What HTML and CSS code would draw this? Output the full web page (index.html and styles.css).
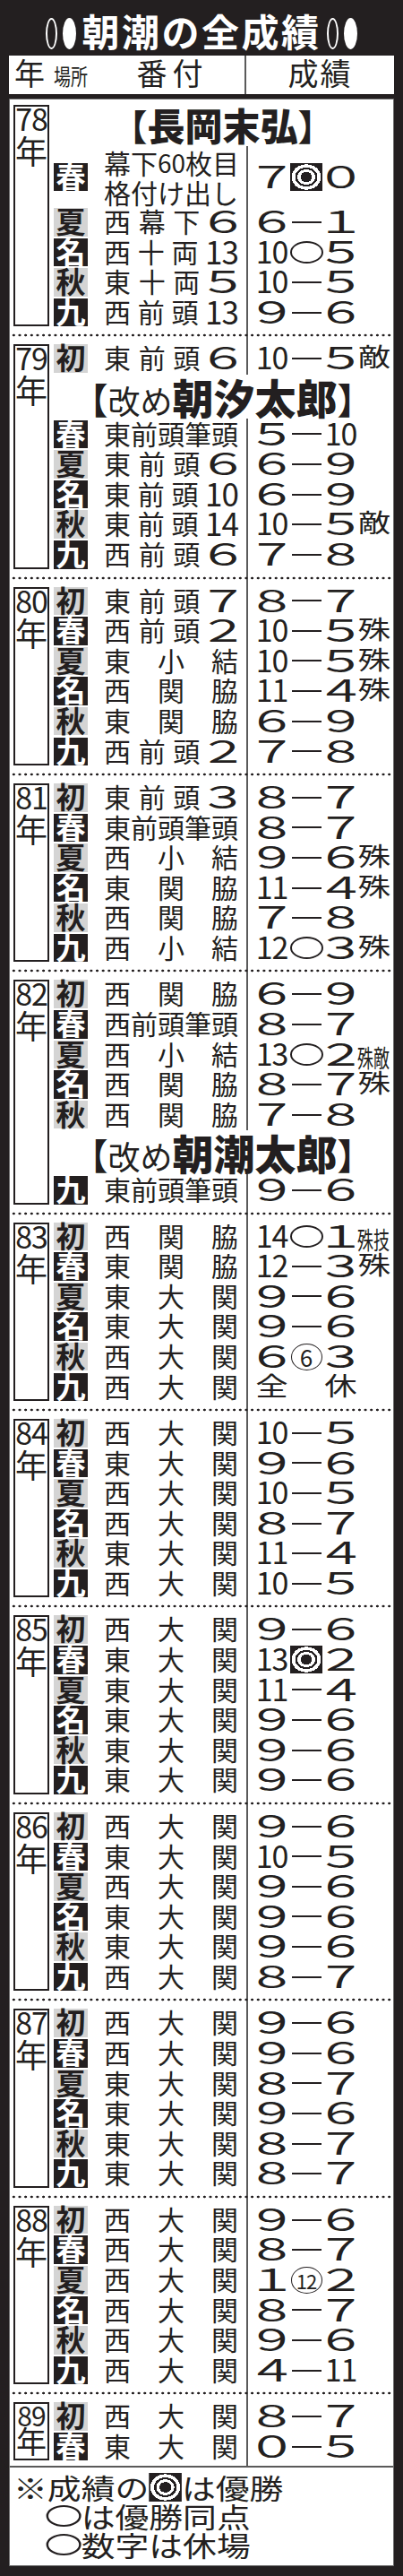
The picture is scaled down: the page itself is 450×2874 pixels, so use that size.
FILE: index.html
```html
<!DOCTYPE html>
<html lang="ja">
<head>
<meta charset="utf-8">
<title>朝潮の全成績</title>
<link rel="stylesheet" href="styles.css">
</head>
<body>
<div class="page">
  <div class="title"><span class="ov o first"></span><span class="ov f"></span><span class="tt">朝潮の全成績</span><span class="ov o"></span><span class="ov f"></span></div>
  <div class="head">
    <div class="hl"><span class="hy">年</span><span class="hb"><span class="hbi">場所</span></span><span class="hr">番付</span></div>
    <div class="hs">成績</div>
  </div>
  <div class="main">
    <div class="data">

      <section class="yr">
        <div class="ybox"><span class="yn">78</span><span class="yk">年</span></div>
        <div class="rows">
          <div class="name n78"><span class="br">【</span>長岡末弘<span class="br">】</span></div>
          <div class="row r2"><b class="bs d">春</b><span class="rank two"><span class="ln"><i>幕</i><i>下</i><i class="d2s">60</i><i>枚</i><i>目</i></span><span class="ln"><i>格</i><i>付</i><i>け</i><i>出</i><i>し</i></span></span><span class="score"><i class="w d1">７</i><i class="m"><b class="win"></b></i><i class="l d1">０</i></span></div>
          <div class="row"><b class="bs g">夏</b><span class="rank"><i>西</i><i>幕</i><i>下</i><i class="d1">６</i></span><span class="score"><i class="w d1">６</i><i class="m"><b class="dash"></b></i><i class="l d1">１</i></span></div>
          <div class="row"><b class="bs d">名</b><span class="rank"><i>西</i><i>十</i><i>両</i><i class="d2">13</i></span><span class="score"><i class="w d2">10</i><i class="m"><b class="tie"></b></i><i class="l d1">５</i></span></div>
          <div class="row"><b class="bs g">秋</b><span class="rank"><i>東</i><i>十</i><i>両</i><i class="d1">５</i></span><span class="score"><i class="w d2">10</i><i class="m"><b class="dash"></b></i><i class="l d1">５</i></span></div>
          <div class="row"><b class="bs d">九</b><span class="rank"><i>西</i><i>前</i><i>頭</i><i class="d2">13</i></span><span class="score"><i class="w d1">９</i><i class="m"><b class="dash"></b></i><i class="l d1">６</i></span></div>
        </div>
      </section>
      <div class="sep"></div>

      <section class="yr">
        <div class="ybox"><span class="yn">79</span><span class="yk">年</span></div>
        <div class="rows">
          <div class="row"><b class="bs g">初</b><span class="rank"><i>東</i><i>前</i><i>頭</i><i class="d1">６</i></span><span class="score"><i class="w d2">10</i><i class="m"><b class="dash"></b></i><i class="l d1">５</i><i class="x wk">敵</i></span></div>
          <div class="name"><span class="br">【</span><span class="pre">改め</span><span class="nm">朝汐太郎</span><span class="br">】</span></div>
          <div class="row"><b class="bs d">春</b><span class="rank"><i>東</i><i>前</i><i>頭</i><i>筆</i><i>頭</i></span><span class="score"><i class="w d1">５</i><i class="m"><b class="dash"></b></i><i class="l d2">10</i></span></div>
          <div class="row"><b class="bs g">夏</b><span class="rank"><i>東</i><i>前</i><i>頭</i><i class="d1">６</i></span><span class="score"><i class="w d1">６</i><i class="m"><b class="dash"></b></i><i class="l d1">９</i></span></div>
          <div class="row"><b class="bs d">名</b><span class="rank"><i>東</i><i>前</i><i>頭</i><i class="d2">10</i></span><span class="score"><i class="w d1">６</i><i class="m"><b class="dash"></b></i><i class="l d1">９</i></span></div>
          <div class="row"><b class="bs g">秋</b><span class="rank"><i>東</i><i>前</i><i>頭</i><i class="d2">14</i></span><span class="score"><i class="w d2">10</i><i class="m"><b class="dash"></b></i><i class="l d1">５</i><i class="x wk">敵</i></span></div>
          <div class="row"><b class="bs d">九</b><span class="rank"><i>西</i><i>前</i><i>頭</i><i class="d1">６</i></span><span class="score"><i class="w d1">７</i><i class="m"><b class="dash"></b></i><i class="l d1">８</i></span></div>
        </div>
      </section>
      <div class="sep"></div>

      <section class="yr">
        <div class="ybox"><span class="yn">80</span><span class="yk">年</span></div>
        <div class="rows">
          <div class="row"><b class="bs g">初</b><span class="rank"><i>東</i><i>前</i><i>頭</i><i class="d1">７</i></span><span class="score"><i class="w d1">８</i><i class="m"><b class="dash"></b></i><i class="l d1">７</i></span></div>
          <div class="row"><b class="bs d">春</b><span class="rank"><i>西</i><i>前</i><i>頭</i><i class="d1">２</i></span><span class="score"><i class="w d2">10</i><i class="m"><b class="dash"></b></i><i class="l d1">５</i><i class="x wk">殊</i></span></div>
          <div class="row"><b class="bs g">夏</b><span class="rank"><i>東</i><i>小</i><i>結</i></span><span class="score"><i class="w d2">10</i><i class="m"><b class="dash"></b></i><i class="l d1">５</i><i class="x wk">殊</i></span></div>
          <div class="row"><b class="bs d">名</b><span class="rank"><i>西</i><i>関</i><i>脇</i></span><span class="score"><i class="w d2">11</i><i class="m"><b class="dash"></b></i><i class="l d1">４</i><i class="x wk">殊</i></span></div>
          <div class="row"><b class="bs g">秋</b><span class="rank"><i>東</i><i>関</i><i>脇</i></span><span class="score"><i class="w d1">６</i><i class="m"><b class="dash"></b></i><i class="l d1">９</i></span></div>
          <div class="row"><b class="bs d">九</b><span class="rank"><i>西</i><i>前</i><i>頭</i><i class="d1">２</i></span><span class="score"><i class="w d1">７</i><i class="m"><b class="dash"></b></i><i class="l d1">８</i></span></div>
        </div>
      </section>
      <div class="sep"></div>

      <section class="yr">
        <div class="ybox"><span class="yn">81</span><span class="yk">年</span></div>
        <div class="rows">
          <div class="row"><b class="bs g">初</b><span class="rank"><i>東</i><i>前</i><i>頭</i><i class="d1">３</i></span><span class="score"><i class="w d1">８</i><i class="m"><b class="dash"></b></i><i class="l d1">７</i></span></div>
          <div class="row"><b class="bs d">春</b><span class="rank"><i>東</i><i>前</i><i>頭</i><i>筆</i><i>頭</i></span><span class="score"><i class="w d1">８</i><i class="m"><b class="dash"></b></i><i class="l d1">７</i></span></div>
          <div class="row"><b class="bs g">夏</b><span class="rank"><i>西</i><i>小</i><i>結</i></span><span class="score"><i class="w d1">９</i><i class="m"><b class="dash"></b></i><i class="l d1">６</i><i class="x wk">殊</i></span></div>
          <div class="row"><b class="bs d">名</b><span class="rank"><i>東</i><i>関</i><i>脇</i></span><span class="score"><i class="w d2">11</i><i class="m"><b class="dash"></b></i><i class="l d1">４</i><i class="x wk">殊</i></span></div>
          <div class="row"><b class="bs g">秋</b><span class="rank"><i>西</i><i>関</i><i>脇</i></span><span class="score"><i class="w d1">７</i><i class="m"><b class="dash"></b></i><i class="l d1">８</i></span></div>
          <div class="row"><b class="bs d">九</b><span class="rank"><i>西</i><i>小</i><i>結</i></span><span class="score"><i class="w d2">12</i><i class="m"><b class="tie"></b></i><i class="l d1">３</i><i class="x wk">殊</i></span></div>
        </div>
      </section>
      <div class="sep"></div>

      <section class="yr">
        <div class="ybox"><span class="yn">82</span><span class="yk">年</span></div>
        <div class="rows">
          <div class="row"><b class="bs g">初</b><span class="rank"><i>西</i><i>関</i><i>脇</i></span><span class="score"><i class="w d1">６</i><i class="m"><b class="dash"></b></i><i class="l d1">９</i></span></div>
          <div class="row"><b class="bs d">春</b><span class="rank"><i>西</i><i>前</i><i>頭</i><i>筆</i><i>頭</i></span><span class="score"><i class="w d1">８</i><i class="m"><b class="dash"></b></i><i class="l d1">７</i></span></div>
          <div class="row"><b class="bs g">夏</b><span class="rank"><i>西</i><i>小</i><i>結</i></span><span class="score"><i class="w d2">13</i><i class="m"><b class="tie"></b></i><i class="l d1">２</i><i class="x sp"><span class="spi">殊敵</span></i></span></div>
          <div class="row"><b class="bs d">名</b><span class="rank"><i>西</i><i>関</i><i>脇</i></span><span class="score"><i class="w d1">８</i><i class="m"><b class="dash"></b></i><i class="l d1">７</i><i class="x wk">殊</i></span></div>
          <div class="row"><b class="bs g">秋</b><span class="rank"><i>西</i><i>関</i><i>脇</i></span><span class="score"><i class="w d1">７</i><i class="m"><b class="dash"></b></i><i class="l d1">８</i></span></div>
          <div class="name"><span class="br">【</span><span class="pre">改め</span><span class="nm">朝潮太郎</span><span class="br">】</span></div>
          <div class="row"><b class="bs d">九</b><span class="rank"><i>東</i><i>前</i><i>頭</i><i>筆</i><i>頭</i></span><span class="score"><i class="w d1">９</i><i class="m"><b class="dash"></b></i><i class="l d1">６</i></span></div>
        </div>
      </section>
      <div class="sep"></div>

      <section class="yr">
        <div class="ybox"><span class="yn">83</span><span class="yk">年</span></div>
        <div class="rows">
          <div class="row"><b class="bs g">初</b><span class="rank"><i>西</i><i>関</i><i>脇</i></span><span class="score"><i class="w d2">14</i><i class="m"><b class="tie"></b></i><i class="l d1">１</i><i class="x sp"><span class="spi">殊技</span></i></span></div>
          <div class="row"><b class="bs d">春</b><span class="rank"><i>東</i><i>関</i><i>脇</i></span><span class="score"><i class="w d2">12</i><i class="m"><b class="dash"></b></i><i class="l d1">３</i><i class="x wk">殊</i></span></div>
          <div class="row"><b class="bs g">夏</b><span class="rank"><i>東</i><i>大</i><i>関</i></span><span class="score"><i class="w d1">９</i><i class="m"><b class="dash"></b></i><i class="l d1">６</i></span></div>
          <div class="row"><b class="bs d">名</b><span class="rank"><i>東</i><i>大</i><i>関</i></span><span class="score"><i class="w d1">９</i><i class="m"><b class="dash"></b></i><i class="l d1">６</i></span></div>
          <div class="row"><b class="bs g">秋</b><span class="rank"><i>西</i><i>大</i><i>関</i></span><span class="score"><i class="w d1">６</i><i class="m"><b class="cn">6</b></i><i class="l d1">３</i></span></div>
          <div class="row"><b class="bs d">九</b><span class="rank"><i>西</i><i>大</i><i>関</i></span><span class="score"><i class="w wk">全</i><i class="m"></i><i class="l wk">休</i></span></div>
        </div>
      </section>
      <div class="sep"></div>

      <section class="yr">
        <div class="ybox"><span class="yn">84</span><span class="yk">年</span></div>
        <div class="rows">
          <div class="row"><b class="bs g">初</b><span class="rank"><i>西</i><i>大</i><i>関</i></span><span class="score"><i class="w d2">10</i><i class="m"><b class="dash"></b></i><i class="l d1">５</i></span></div>
          <div class="row"><b class="bs d">春</b><span class="rank"><i>東</i><i>大</i><i>関</i></span><span class="score"><i class="w d1">９</i><i class="m"><b class="dash"></b></i><i class="l d1">６</i></span></div>
          <div class="row"><b class="bs g">夏</b><span class="rank"><i>西</i><i>大</i><i>関</i></span><span class="score"><i class="w d2">10</i><i class="m"><b class="dash"></b></i><i class="l d1">５</i></span></div>
          <div class="row"><b class="bs d">名</b><span class="rank"><i>西</i><i>大</i><i>関</i></span><span class="score"><i class="w d1">８</i><i class="m"><b class="dash"></b></i><i class="l d1">７</i></span></div>
          <div class="row"><b class="bs g">秋</b><span class="rank"><i>東</i><i>大</i><i>関</i></span><span class="score"><i class="w d2">11</i><i class="m"><b class="dash"></b></i><i class="l d1">４</i></span></div>
          <div class="row"><b class="bs d">九</b><span class="rank"><i>西</i><i>大</i><i>関</i></span><span class="score"><i class="w d2">10</i><i class="m"><b class="dash"></b></i><i class="l d1">５</i></span></div>
        </div>
      </section>
      <div class="sep"></div>

      <section class="yr">
        <div class="ybox"><span class="yn">85</span><span class="yk">年</span></div>
        <div class="rows">
          <div class="row"><b class="bs g">初</b><span class="rank"><i>西</i><i>大</i><i>関</i></span><span class="score"><i class="w d1">９</i><i class="m"><b class="dash"></b></i><i class="l d1">６</i></span></div>
          <div class="row"><b class="bs d">春</b><span class="rank"><i>東</i><i>大</i><i>関</i></span><span class="score"><i class="w d2">13</i><i class="m"><b class="win"></b></i><i class="l d1">２</i></span></div>
          <div class="row"><b class="bs g">夏</b><span class="rank"><i>東</i><i>大</i><i>関</i></span><span class="score"><i class="w d2">11</i><i class="m"><b class="dash"></b></i><i class="l d1">４</i></span></div>
          <div class="row"><b class="bs d">名</b><span class="rank"><i>東</i><i>大</i><i>関</i></span><span class="score"><i class="w d1">９</i><i class="m"><b class="dash"></b></i><i class="l d1">６</i></span></div>
          <div class="row"><b class="bs g">秋</b><span class="rank"><i>東</i><i>大</i><i>関</i></span><span class="score"><i class="w d1">９</i><i class="m"><b class="dash"></b></i><i class="l d1">６</i></span></div>
          <div class="row"><b class="bs d">九</b><span class="rank"><i>東</i><i>大</i><i>関</i></span><span class="score"><i class="w d1">９</i><i class="m"><b class="dash"></b></i><i class="l d1">６</i></span></div>
        </div>
      </section>
      <div class="sep"></div>

      <section class="yr">
        <div class="ybox"><span class="yn">86</span><span class="yk">年</span></div>
        <div class="rows">
          <div class="row"><b class="bs g">初</b><span class="rank"><i>西</i><i>大</i><i>関</i></span><span class="score"><i class="w d1">９</i><i class="m"><b class="dash"></b></i><i class="l d1">６</i></span></div>
          <div class="row"><b class="bs d">春</b><span class="rank"><i>東</i><i>大</i><i>関</i></span><span class="score"><i class="w d2">10</i><i class="m"><b class="dash"></b></i><i class="l d1">５</i></span></div>
          <div class="row"><b class="bs g">夏</b><span class="rank"><i>西</i><i>大</i><i>関</i></span><span class="score"><i class="w d1">９</i><i class="m"><b class="dash"></b></i><i class="l d1">６</i></span></div>
          <div class="row"><b class="bs d">名</b><span class="rank"><i>東</i><i>大</i><i>関</i></span><span class="score"><i class="w d1">９</i><i class="m"><b class="dash"></b></i><i class="l d1">６</i></span></div>
          <div class="row"><b class="bs g">秋</b><span class="rank"><i>東</i><i>大</i><i>関</i></span><span class="score"><i class="w d1">９</i><i class="m"><b class="dash"></b></i><i class="l d1">６</i></span></div>
          <div class="row"><b class="bs d">九</b><span class="rank"><i>西</i><i>大</i><i>関</i></span><span class="score"><i class="w d1">８</i><i class="m"><b class="dash"></b></i><i class="l d1">７</i></span></div>
        </div>
      </section>
      <div class="sep"></div>

      <section class="yr">
        <div class="ybox"><span class="yn">87</span><span class="yk">年</span></div>
        <div class="rows">
          <div class="row"><b class="bs g">初</b><span class="rank"><i>西</i><i>大</i><i>関</i></span><span class="score"><i class="w d1">９</i><i class="m"><b class="dash"></b></i><i class="l d1">６</i></span></div>
          <div class="row"><b class="bs d">春</b><span class="rank"><i>西</i><i>大</i><i>関</i></span><span class="score"><i class="w d1">９</i><i class="m"><b class="dash"></b></i><i class="l d1">６</i></span></div>
          <div class="row"><b class="bs g">夏</b><span class="rank"><i>東</i><i>大</i><i>関</i></span><span class="score"><i class="w d1">８</i><i class="m"><b class="dash"></b></i><i class="l d1">７</i></span></div>
          <div class="row"><b class="bs d">名</b><span class="rank"><i>東</i><i>大</i><i>関</i></span><span class="score"><i class="w d1">９</i><i class="m"><b class="dash"></b></i><i class="l d1">６</i></span></div>
          <div class="row"><b class="bs g">秋</b><span class="rank"><i>東</i><i>大</i><i>関</i></span><span class="score"><i class="w d1">８</i><i class="m"><b class="dash"></b></i><i class="l d1">７</i></span></div>
          <div class="row"><b class="bs d">九</b><span class="rank"><i>東</i><i>大</i><i>関</i></span><span class="score"><i class="w d1">８</i><i class="m"><b class="dash"></b></i><i class="l d1">７</i></span></div>
        </div>
      </section>
      <div class="sep"></div>

      <section class="yr">
        <div class="ybox"><span class="yn">88</span><span class="yk">年</span></div>
        <div class="rows">
          <div class="row"><b class="bs g">初</b><span class="rank"><i>西</i><i>大</i><i>関</i></span><span class="score"><i class="w d1">９</i><i class="m"><b class="dash"></b></i><i class="l d1">６</i></span></div>
          <div class="row"><b class="bs d">春</b><span class="rank"><i>西</i><i>大</i><i>関</i></span><span class="score"><i class="w d1">８</i><i class="m"><b class="dash"></b></i><i class="l d1">７</i></span></div>
          <div class="row"><b class="bs g">夏</b><span class="rank"><i>西</i><i>大</i><i>関</i></span><span class="score"><i class="w d1">１</i><i class="m"><b class="cn c2">12</b></i><i class="l d1">２</i></span></div>
          <div class="row"><b class="bs d">名</b><span class="rank"><i>西</i><i>大</i><i>関</i></span><span class="score"><i class="w d1">８</i><i class="m"><b class="dash"></b></i><i class="l d1">７</i></span></div>
          <div class="row"><b class="bs g">秋</b><span class="rank"><i>西</i><i>大</i><i>関</i></span><span class="score"><i class="w d1">９</i><i class="m"><b class="dash"></b></i><i class="l d1">６</i></span></div>
          <div class="row"><b class="bs d">九</b><span class="rank"><i>西</i><i>大</i><i>関</i></span><span class="score"><i class="w d1">４</i><i class="m"><b class="dash"></b></i><i class="l d2">11</i></span></div>
        </div>
      </section>
      <div class="sep"></div>

      <section class="yr">
        <div class="ybox sm"><span class="yn">89</span><span class="yk">年</span></div>
        <div class="rows">
          <div class="row"><b class="bs g">初</b><span class="rank"><i>西</i><i>大</i><i>関</i></span><span class="score"><i class="w d1">８</i><i class="m"><b class="dash"></b></i><i class="l d1">７</i></span></div>
          <div class="row"><b class="bs d">春</b><span class="rank"><i>東</i><i>大</i><i>関</i></span><span class="score"><i class="w d1">０</i><i class="m"><b class="dash"></b></i><i class="l d1">５</i></span></div>
        </div>
      </section>
    </div>
    <div class="note">
      <p>※成績の<b class="win nw"></b>は優勝</p>
      <p class="ind"><b class="ell"></b>は優勝同点</p>
      <p class="ind"><b class="ell"></b>数字は休場</p>
    </div>
  </div>
</div>
</body>
</html>
```

FILE: styles.css
```css
* { box-sizing: border-box; margin: 0; padding: 0; }
html, body { background: #231f20; }
body {
  width: 450px;
  overflow-x: hidden;
  font-family: "Noto Sans CJK JP", "Noto Sans", sans-serif;
  color: #231f20;
}
i, b { font-style: normal; }

.page { padding: 0 10px 10px; }

/* title */
.title {
  height: 62px;
  padding-top: 6px;
  display: flex;
  align-items: center;
  justify-content: center;
  color: #fff;
  font-size: 42px;
  font-weight: 700;
  line-height: 42px;
}
.ov { flex: none; display: block; width: 13px; height: 35px; border-radius: 50%; margin-top: 6px; margin-left: 6px; }
.ov.first { margin-left: 0; }
.ov.o { border: 2.5px solid #fff; }
.ov.f { background: #fff; width: 15px; }
.tt { margin-left: 6px; letter-spacing: 2.5px; white-space: nowrap; }

/* header */
.head {
  height: 43px;
  background: #fff;
  display: flex;
  font-size: 34px;
  line-height: 37px;
}
.hl {
  width: 265px;
  flex: none;
  display: flex;
  align-items: baseline;
  border-right: 2px solid #5a5a5a;
  padding-left: 6px;
  white-space: nowrap;
}
.hy { flex: none; width: 34px; }
.hb { flex: none; width: 38px; margin-left: 10px; font-size: 25px; }
.hbi { display: inline-block; transform: scaleX(.76); transform-origin: left; }
.hr { flex: 1; text-align: center; padding-left: 14px; letter-spacing: 6px; }
.hs { flex: 1; text-align: center; letter-spacing: 2px; }

/* main box */
.main { margin-top: 5px; background: #fff; border: 1px solid #6d6d6d; padding-top: 6px; }
.data {
  padding: 0 2px 6px 4px;
  background: linear-gradient(#5a5a5a, #5a5a5a) no-repeat 264px 0 / 2px 100%;
}

.yr { display: flex; gap: 5px; }
.ybox { flex: none; width: 40px; border: 2px solid #231f20; text-align: center; background: #fff; }
.yn { display: block; font-size: 34px; line-height: 26px; letter-spacing: -1px; }
.yk { display: block; font-size: 36px; line-height: 44px; }
.ybox.sm .yn { font-size: 30px; line-height: 24px; }
.ybox.sm .yk { font-size: 34px; line-height: 34px; }

.rows { flex: 1; display: flex; flex-direction: column; gap: 2.1px; }

.name {
  flex: none;
  height: 48.5px;
  background: #fff;
  text-align: center;
  white-space: nowrap;
  font-size: 46px;
  line-height: 48px;
  font-weight: 900;
}
.name.n78 { height: 46px; font-size: 42px; line-height: 44px; }
.br { font-size: 40px; font-weight: 700; }
.pre { font-size: 36px; font-weight: 400; }
.nm { font-size: 46px; font-weight: 900; }

.row { flex: none; display: flex; height: 31.5px; align-items: flex-start; }
.row.r2 { height: 65px; }

.bs {
  flex: none;
  width: 38px;
  height: 31.5px;
  font-size: 33px;
  font-weight: 700;
  line-height: 28px;
  text-align: center;
}
.bs.g { background: #d4d4d4; color: #231f20; }
.bs.d { background: #231f20; color: #fff; }
.r2 .bs { align-self: center; }

.rank {
  flex: none;
  margin-left: 18px;
  width: 150px;
  display: flex;
  justify-content: space-between;
  font-size: 30px;
  line-height: 28px;
  white-space: nowrap;
}
.rank .d1 { width: 34px; text-align: center; font-size: 34px; transform: scaleX(1.65); }
.rank .d2 { font-size: 35px; letter-spacing: -1px; }
.rank.two { flex-direction: column; justify-content: flex-start; }
.ln { display: flex; justify-content: space-between; line-height: 33px; }
.ln .d2s { font-size: 28px; }

.score { flex: none; margin-left: 19px; display: flex; font-size: 34px; line-height: 27px; }
.r2 .score { align-self: center; }
.score > i { display: block; flex: none; height: 31.5px; text-align: center; white-space: nowrap; }
.score > .w { width: 37px; }
.score > .m { width: 40px; display: flex; align-items: center; justify-content: center; }
.score > .l { width: 37px; }
.score > .x { width: 38px; }
.score .d1 { transform: scaleX(1.65); }
.score .d2 { letter-spacing: -1px; }
.score .wk { font-size: 28px; transform: scaleX(1.3); }
.score > .sp { text-align: left; overflow: visible; }
.spi { display: inline-block; width: 37px; font-size: 18px; line-height: 27px; letter-spacing: 0; transform: scaleY(1.5); transform-origin: 50% 60%; }

.dash { display: block; flex: none; width: 33px; height: 2px; background: #231f20; }
.tie { display: block; flex: none; width: 37px; height: 25px; border: 2px solid #231f20; border-radius: 50%; }
.cn {
  display: flex;
  flex: none;
  align-items: center;
  justify-content: center;
  width: 35px;
  height: 30px;
  border: 1.5px solid #231f20;
  border-radius: 50%;
  font-size: 26px;
  font-weight: 400;
  line-height: 1;
}
.cn.c2 { font-size: 22px; letter-spacing: -1px; }
.win {
  display: block;
  flex: none;
  width: 36px;
  height: 31px;
  background: radial-gradient(ellipse closest-side at center, #231f20 0 36%, #fff 36% 55%, #231f20 55% 69%, #fff 69% 91%, #231f20 91%);
}

.sep {
  height: 20px;
  margin: 0 -1px 0 -3px;
  background: radial-gradient(circle, #231f20 1.1px, rgba(35,31,32,0) 1.7px) 0 50% / 6.67px 6px repeat-x;
}

/* note */
.note { border-top: 2px solid #5a5a5a; padding: 6px 4px 7px; }
.note p {
  width: 290px;
  height: 32px;
  font-size: 31px;
  line-height: 32px;
  white-space: nowrap;
  transform: scaleX(1.22);
  transform-origin: 0 0;
}
.note .ind { padding-left: 30px; }
.note .nw { display: inline-block; vertical-align: top; width: 30px; height: 32px; }
.ell { display: inline-block; vertical-align: top; margin-top: 4px; width: 32px; height: 24px; border: 2px solid #231f20; border-radius: 50%; }
```
